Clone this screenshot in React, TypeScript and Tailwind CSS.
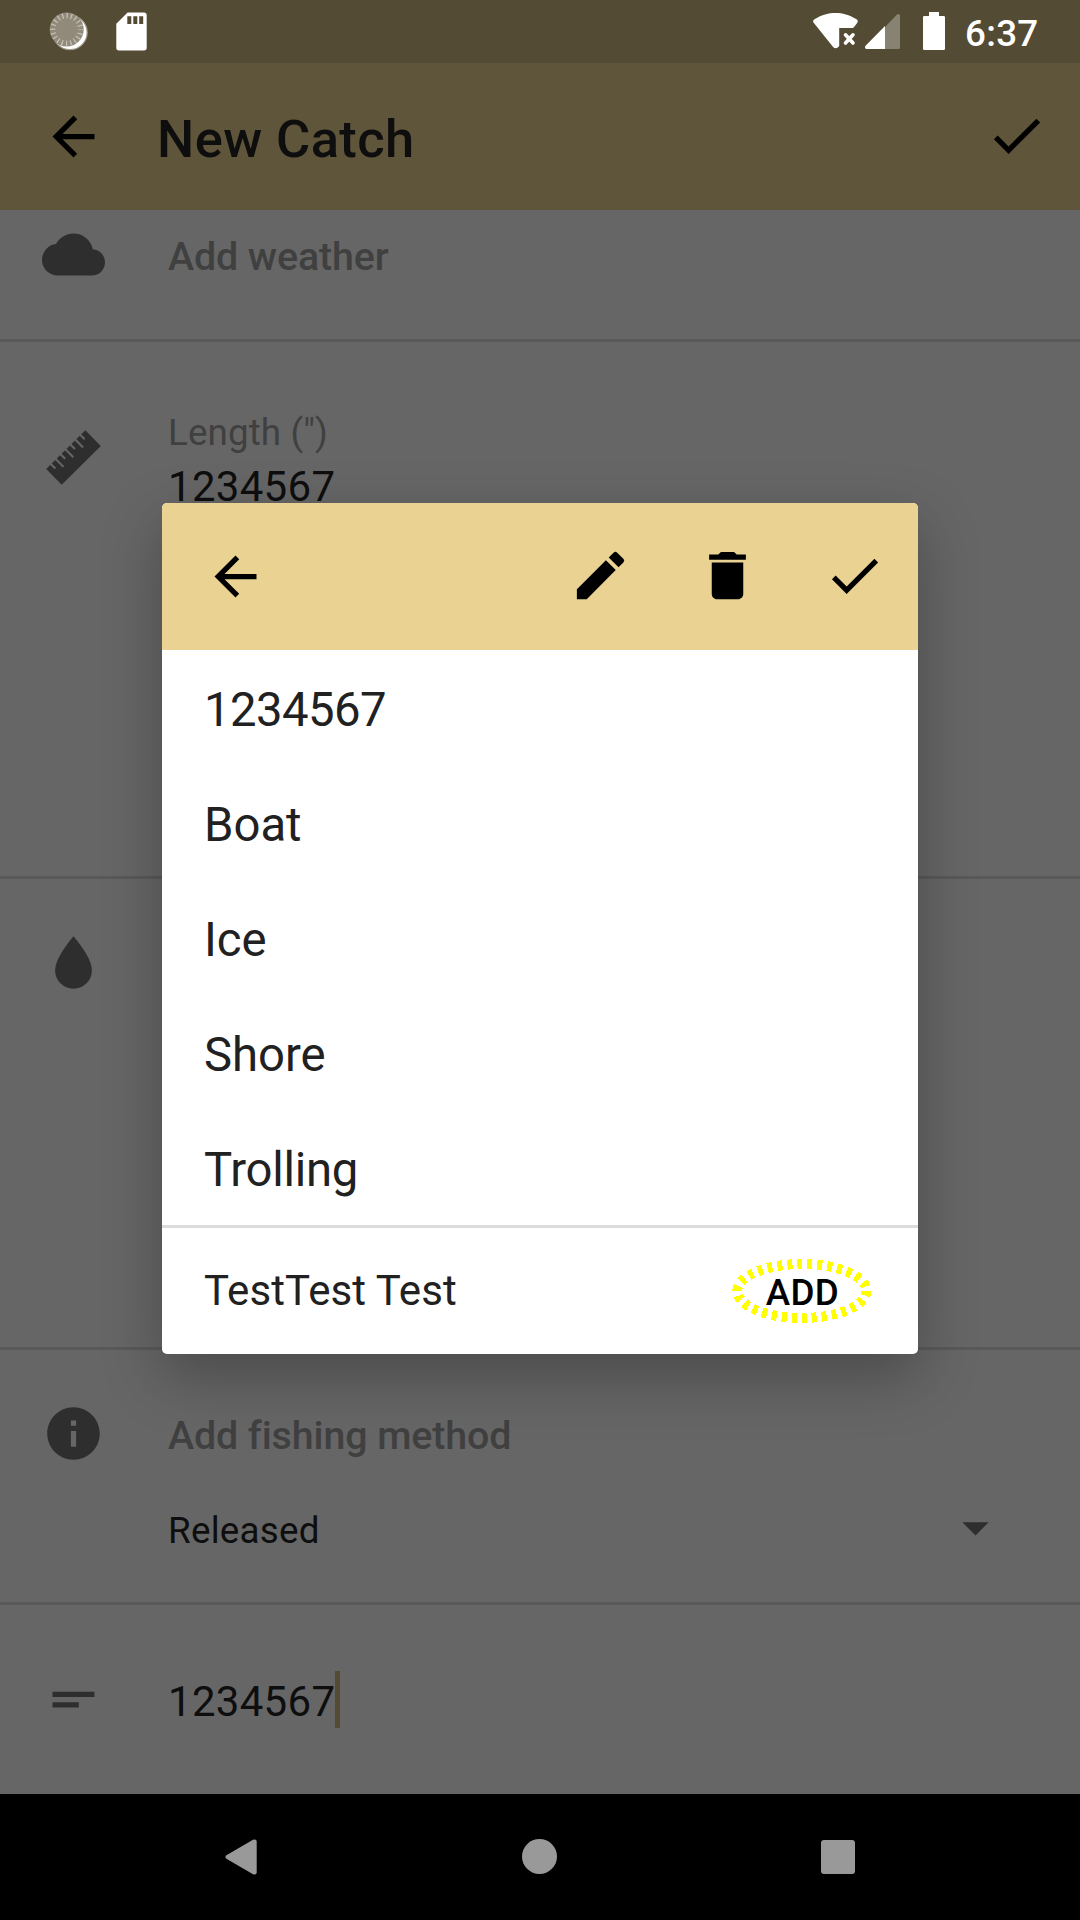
import React from "react";

type IconProps = { d: string; className?: string };

function Icon({ d, className = "" }: IconProps) {
  return (
    <svg viewBox="0 0 24 24" className={`block size-[63px] shrink-0 fill-current ${className}`}>
      <path d={d} />
    </svg>
  );
}

const BACK = "M20 11H7.83l5.59-5.59L12 4l-8 8 8 8 1.41-1.41L7.83 13H20v-2z";
const CHECK = "M9 16.17L4.83 12l-1.42 1.41L9 19 21 7l-1.41-1.41z";
const CLOUD =
  "M19.35 10.04A7.49 7.49 0 0 0 12 4C9.11 4 6.6 5.64 5.35 8.04A5.994 5.994 0 0 0 0 14c0 3.31 2.69 6 6 6h13c2.76 0 5-2.24 5-5 0-2.64-2.05-4.78-4.65-4.96z";
const DROP = "M12 2C8.4 6.3 5 11.3 5 15a7 7 0 0 0 14 0C19 11.3 15.6 6.3 12 2z";
const INFO = "M12 2C6.48 2 2 6.48 2 12s4.48 10 10 10 10-4.48 10-10S17.52 2 12 2zm1 15h-2v-6h2v6zm0-8h-2V7h2v2z";
const NOTES = "M4 9h16v2H4V9zm0 4h10v2H4v-2z";
const CARET = "M7 10l5 5 5-5z";
const PENCIL =
  "M3 17.25V21h3.75L17.81 9.94l-3.75-3.75L3 17.25zM20.71 7.04a1 1 0 0 0 0-1.41l-2.34-2.34a1 1 0 0 0-1.41 0l-1.83 1.83 3.75 3.75 1.83-1.83z";
const TRASH = "M6 19c0 1.1.9 2 2 2h8c1.1 0 2-.9 2-2V7H6v12zM19 4h-3.5l-1-1h-5l-1 1H5v2h14V4z";

function RulerIcon() {
  return (
    <svg viewBox="0 0 24 24" className="mt-[24px] block size-[63px] shrink-0">
      <path fill="#2e2e2e" d="M1.600 16.400L16.500 1.600L22.400 7.600L7.500 22.400z" />
      <path
        stroke="#666"
        strokeWidth="0.800"
        d="M3.060 14.150L5.100 16.190M4.920 12.290L8.200 15.570M6.790 10.440L8.830 12.480M8.650 8.600L11.930 11.880M10.510 6.750L12.550 8.790M12.380 4.900L15.660 8.180M14.240 3.050L16.280 5.090"
      />
    </svg>
  );
}

function StatusBar() {
  return (
    <div className="flex h-[63px] items-start bg-[#544b34] text-white">
      <svg viewBox="0 0 40 63" className="ml-[49px] h-[63px] w-[40px]">
        <circle cx="21" cy="32.5" r="17.2" fill="#fff" stroke="#9d9888" strokeWidth="1.2" />
        <circle cx="17.7" cy="29.5" r="17" fill="#918a7a" />
        <circle cx="17.7" cy="29.5" r="13.8" fill="none" stroke="#c3beb3" strokeWidth="5.4" strokeDasharray="1.3 3.036" strokeDashoffset="0.65" />
      </svg>
      <svg viewBox="0 0 32 63" className="ml-[27px] h-[63px] w-[32px]">
        <path fill="#fff" d="M11.6 12.5H28a2.7 2.7 0 0 1 2.7 2.7v32.6a2.7 2.7 0 0 1-2.7 2.7H3a2.7 2.7 0 0 1-2.7-2.7V23.8z" />
        <path fill="#544b34" d="M11.3 16.3h4v7.6h-4zM17.3 16.3h4v7.6h-4zM23.2 16.3h4v7.6h-4z" />
      </svg>
      <svg viewBox="0 0 140 63" className="ml-auto h-[63px] w-[140px]">
        <path fill="#fff" d="M3.500 22.500C2.800 21.300 3.100 20 4.500 19.200 12 14.800 18.500 13 25.500 13S39 14.800 46.500 19.200C47.900 20 48.200 21.300 47.300 22.700L44.300 26.800Q43.500 28 42 28H29.200V46Q26 50.300 22.900 46.800z" />
        <path stroke="#fff" strokeWidth="3.600" strokeLinecap="round" d="M35.500 34.800L43 43M43 34.800L35.500 43" />
        <path fill="#888272" d="M75 27L86.700 14.700Q88.500 13.300 90 15V47.500Q90 49 88.500 49H75z" />
        <path fill="#fff" d="M75 26V49H56.500Q54.300 48.500 55.300 46z" />
        <path fill="#fff" d="M119 12h10v4h4.700q1.300 0 1.300 1.300v31.400q0 1.300-1.300 1.300h-19.400q-1.300 0-1.300-1.300V17.300q0-1.300 1.300-1.300h4.700z" />
      </svg>
      <span className="mr-[41px] ml-[15px] w-[74px] pt-[2px] text-[36.75px] leading-[63px] font-medium tracking-[0.3px]">
        6:37
      </span>
    </div>
  );
}

function AddMethodButton() {
  return (
    <button className="relative mr-[46px] flex h-[66px] w-[140px] items-center justify-center pt-[5px] pl-[1px] text-[36.75px] leading-none font-medium tracking-[0.3px] text-black">
      ADD
      <svg viewBox="0 0 140 66" shapeRendering="crispEdges" className="absolute inset-0 h-full w-full">
        <ellipse cx="69.900" cy="33" rx="64.600" ry="27" fill="none" stroke="#ff0" strokeWidth="10" strokeDasharray="5 5" />
      </svg>
    </button>
  );
}

function MethodDialog() {
  const methods = ["1234567", "Boat", "Ice", "Shore", "Trolling"];
  return (
    <div className="absolute top-[503px] left-[162px] w-[756px] overflow-hidden rounded-[5px] bg-white text-[#212121] shadow-[0_22px_60px_rgba(0,0,0,0.28)]">
      <header className="flex h-[147px] items-center bg-[#ead392] pr-8 pl-[42px] text-black">
        <Icon d={BACK} />
        <div className="ml-auto flex gap-16 pb-[2px]">
          <Icon d={PENCIL} />
          <Icon d={TRASH} />
          <Icon d={CHECK} />
        </div>
      </header>
      <ul className="border-b-3 border-[#dcdcdc]">
        {methods.map((m) => (
          <li
            key={m}
            className="h-[115px] pt-[3px] pl-[42px] text-[47.25px] leading-[115px] first:tracking-[-0.55px] last:tracking-[-0.25px]"
          >
            {m}
          </li>
        ))}
      </ul>
      <footer className="flex h-[126px] items-center pl-[42px]">
        <span className="text-[42px] leading-none tracking-[0.08px]">TestTest Test</span>
        <span className="ml-auto">
          <AddMethodButton />
        </span>
      </footer>
    </div>
  );
}

export default function App() {
  return (
    <div className="relative flex h-[1920px] w-[1080px] flex-col overflow-hidden bg-[#666] font-['Roboto',sans-serif] text-[#0e0e0e]">
      <StatusBar />
      <header className="flex h-[147px] items-center bg-[#5f553a] pr-8 pl-[42px]">
        <Icon d={BACK} className="text-black" />
        <h1 className="ml-[52px] pt-[5px] text-[52.5px] leading-none font-medium tracking-[0.4px]">New Catch</h1>
        <Icon d={CHECK} className="mb-[2px] ml-auto text-black" />
      </header>

      <section className="flex h-[132px] items-start border-b-3 border-[#595959] pt-[13px] pl-[42px]">
        <Icon d={CLOUD} className="text-[#2e2e2e]" />
        <span className="ml-[63px] pt-[2px] text-[39.375px] leading-[63px] font-medium tracking-[-0.1px] text-[#404040]">
          Add weather
        </span>
      </section>

      <section className="flex h-[537px] items-start border-b-3 border-[#595959] pt-[60px] pl-[42px]">
        <RulerIcon />
        <div className="ml-[63px] flex flex-col">
          <span className="pt-[1px] text-[36.75px] leading-[60px] tracking-[0.12px] text-[#404040]">Length (")</span>
          <span className="-mt-px text-[42px] leading-[49px] tracking-[0.3px]">1234567</span>
        </div>
      </section>

      <section className="flex h-[471px] items-start border-b-3 border-[#595959] pt-[52px] pl-[42px]">
        <Icon d={DROP} className="text-[#2e2e2e]" />
      </section>

      <section className="flex h-[255px] items-start border-b-3 border-[#595959] pt-[52px] pl-[42px]">
        <Icon d={INFO} className="text-[#2e2e2e]" />
        <div className="ml-[63px] flex flex-1 flex-col">
          <span className="pt-[2px] text-[39.375px] leading-[63px] font-medium tracking-[-0.1px] text-[#404040]">
            Add fishing method
          </span>
          <div className="mt-[30px] flex items-start justify-between pr-[73px]">
            <span className="pt-[4px] text-[36.75px] leading-[60px] tracking-[0.25px]">Released</span>
            <Icon d={CARET} className="-mt-px text-[#2e2e2e]" />
          </div>
        </div>
      </section>

      <section className="flex h-[189px] items-start pt-[62px] pl-[42px]">
        <Icon d={NOTES} className="mt-[1px] text-[#2e2e2e]" />
        <div className="mt-[4px] ml-[63px] flex h-[57px] items-center">
          <span className="w-[167px] pt-[4px] text-[42px] leading-[57px] tracking-[0.3px]">1234567</span>
          <span className="h-[57px] w-[5px] bg-[#544b34]" />
        </div>
      </section>

      <nav className="flex h-[126px] items-center justify-between bg-black pr-[225px] pl-[225px] text-[#999]">
        <svg viewBox="0 0 32 36" className="h-[36px] w-[32px] fill-current">
          <path d="M1.400 16.300L28 .8Q31.500-.5 31.700 2.500V33.500Q31.500 36.500 28 35.200L1.400 19.700Q-.6 18 1.400 16.300z" />
        </svg>
        <span className="mb-[1px] size-[35px] rounded-full bg-current" />
        <span className="size-[34px] rounded-[3px] bg-current" />
      </nav>

      <MethodDialog />
    </div>
  );
}
